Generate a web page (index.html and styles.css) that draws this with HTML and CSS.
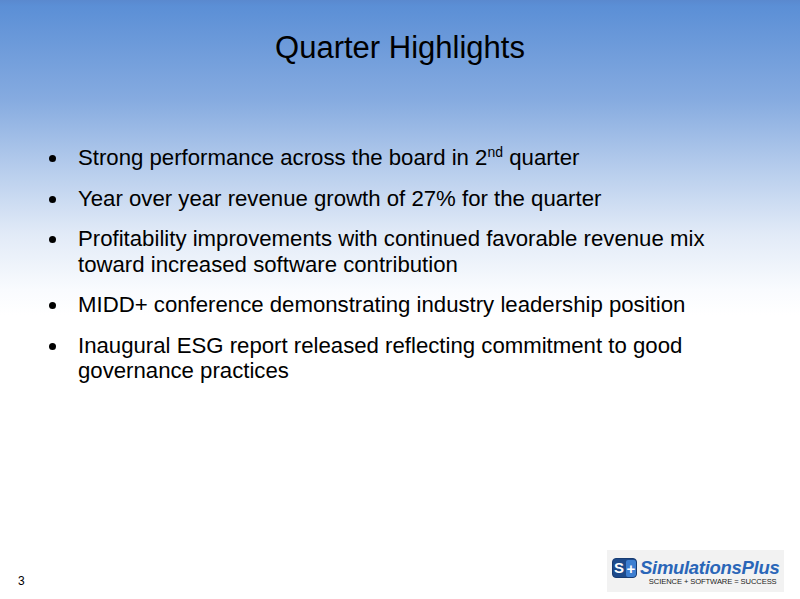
FILE: index.html
```html
<!DOCTYPE html>
<html>
<head>
<meta charset="utf-8">
<link rel="stylesheet" href="styles.css">
</head>
<body>
<div class="slide">
  <h1 class="title">Quarter Highlights</h1>
  <ul class="bullets">
    <li>Strong performance across the board in 2<sup>nd</sup> quarter</li>
    <li>Year over year revenue growth of 27% for the quarter</li>
    <li>Profitability improvements with continued favorable revenue mix toward increased software contribution</li>
    <li>MIDD+ conference demonstrating industry leadership position</li>
    <li>Inaugural ESG report released reflecting commitment to good governance practices</li>
  </ul>
  <div class="footer">
    <div class="pagenum">3</div>
    <div class="logo">
      <div class="mark"><span class="mark-s">S</span><span class="mark-p">+</span></div>
      <div class="wordmark">
        <div class="name">SimulationsPlus</div>
        <div class="tag">SCIENCE + SOFTWARE = SUCCESS</div>
      </div>
    </div>
  </div>
</div>
</body>
</html>
```
FILE: styles.css
```css
html, body {
  margin: 0;
  padding: 0;
}
body {
  width: 800px;
  height: 599px;
  overflow: hidden;
  font-family: "Liberation Sans", Arial, sans-serif;
  color: #000;
}
.slide {
  width: 800px;
  height: 599px;
  display: flex;
  flex-direction: column;
  background: linear-gradient(to bottom, #5a89cf 0px, #5b8fd6 6px, #86abe0 100px, #b5ccec 167px, #e1eaf7 233px, #f9fbfe 290px, #ffffff 315px, #ffffff 100%);
}
.title {
  margin: 30px 0 0 0;
  font-weight: normal;
  font-size: 31px;
  line-height: 36px;
  text-align: center;
}
.bullets {
  list-style: none;
  margin: 79px 0 0 0;
  padding: 0 0 0 78px;
  width: 645px;
  font-size: 22.2px;
  line-height: 25.5px;
}
.bullets li {
  position: relative;
  margin-bottom: 15px;
}
.bullets li::before {
  content: "";
  position: absolute;
  left: -29px;
  top: 10px;
  width: 7px;
  height: 7px;
  border-radius: 50%;
  background: #000;
}
.bullets sup {
  font-size: 14px;
  line-height: 0;
  vertical-align: 8px;
}
.footer {
  margin-top: auto;
  display: flex;
  justify-content: space-between;
  align-items: flex-end;
  padding: 0 16px 7px 18px;
}
.pagenum {
  font-size: 12px;
  line-height: 14px;
  margin-bottom: 4px;
}
.logo {
  display: flex;
  align-items: flex-start;
  background: #f2f2f2;
  width: 177px;
  height: 42px;
  padding: 8px 0 0 5px;
  box-sizing: border-box;
}
.mark {
  display: flex;
  flex-shrink: 0;
  height: 20px;
  width: 25px;
  border-radius: 4px;
  overflow: hidden;
  background: #1d4a8a;
  border: 1px solid #173c73;
  box-sizing: border-box;
}
.mark-s {
  color: #fff;
  font-weight: bold;
  font-size: 15px;
  line-height: 18px;
  width: 12px;
  text-align: center;
}
.mark-p {
  background: #3d7fd1;
  color: #fff;
  font-weight: bold;
  font-size: 15px;
  line-height: 17px;
  width: 10px;
  margin: 1px 0 0 1px;
  border-radius: 2px;
  text-align: center;
}
.wordmark {
  display: flex;
  flex-direction: column;
  align-items: center;
  margin-left: 3px;
}
.name {
  font-style: italic;
  font-weight: bold;
  font-size: 18.5px;
  line-height: 20px;
  color: #2a66b8;
  letter-spacing: -0.3px;
}
.tag {
  font-size: 7.6px;
  line-height: 8px;
  color: #222;
  letter-spacing: -0.1px;
  margin-left: 6px;
}
```
